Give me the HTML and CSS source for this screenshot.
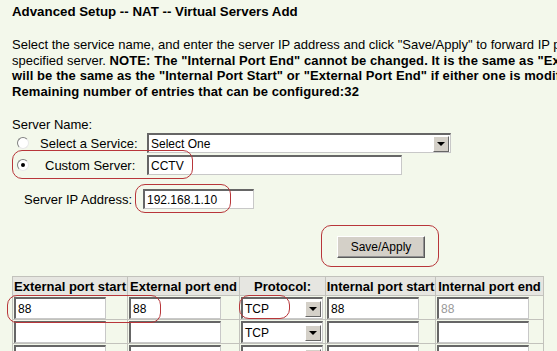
FILE: index.html
```html
<!DOCTYPE html>
<html lang="en">

<head>
  <meta charset="UTF-8" />
  <title>Virtual Servers Add</title>
  <link rel="stylesheet" href="styles.css">
</head>

<body>
  <div class="page">
    <div class="title">Advanced Setup -- NAT -- Virtual Servers Add</div>

    <p class="intro">
      Select the service name, and enter the server IP address and click "Save/Apply" to forward IP packets for this service to the<br>
      specified server. <b>NOTE: The "Internal Port End" cannot be changed. It is the same as "External Port End" normally and<br>
      will be the same as the "Internal Port Start" or "External Port End" if either one is modified.</b><br>
      <b>Remaining number of entries that can be configured:32</b>
    </p>

    <div class="server-name">Server Name:</div>
    <div class="service-grid">
      <span class="radio"></span>
      <span class="label">Select a Service:</span>
      <div class="select service-select"><span class="val">Select One</span><span class="arrow"></span></div>

      <span class="radio checked"></span>
      <span class="label indent">Custom Server:</span>
      <input class="field custom-field" type="text" value="CCTV">
    </div>

    <div class="ip-row">
      <span class="ip-label">Server IP Address:</span>
      <input class="field ip-field" type="text" value="192.168.1.10">
    </div>

    <div class="actions">
      <button type="button" class="btn">Save/Apply</button>
    </div>

    <table class="ports">
      <colgroup>
        <col style="width:115px"><col style="width:112px"><col style="width:86px"><col style="width:110px"><col style="width:108px">
      </colgroup>
      <tr>
        <th>External port start</th>
        <th>External port end</th>
        <th>Protocol:</th>
        <th>Internal port start</th>
        <th>Internal port end</th>
      </tr>
      <tr>
        <td><input class="field port" type="text" value="88"></td>
        <td><input class="field port" type="text" value="88"></td>
        <td><div class="select proto"><span class="val">TCP</span><span class="arrow"></span></div></td>
        <td><input class="field port" type="text" value="88"></td>
        <td><input class="field port" type="text" value="88" disabled></td>
      </tr>
      <tr>
        <td><input class="field port" type="text"></td>
        <td><input class="field port" type="text"></td>
        <td><div class="select proto"><span class="val">TCP</span><span class="arrow"></span></div></td>
        <td><input class="field port" type="text"></td>
        <td><input class="field port" type="text" disabled></td>
      </tr>
      <tr>
        <td><input class="field port" type="text"></td>
        <td><input class="field port" type="text"></td>
        <td><div class="select proto"><span class="val">TCP</span><span class="arrow"></span></div></td>
        <td><input class="field port" type="text"></td>
        <td><input class="field port" type="text" disabled></td>
      </tr>
    </table>

    <!-- red annotation marks drawn over the form -->
    <div class="mark mark-custom"></div>
    <div class="mark mark-ip"></div>
    <div class="mark mark-save"></div>
    <div class="mark mark-ports"></div>
    <div class="mark mark-proto"></div>
  </div>
</body>

</html>
```

FILE: styles.css
```css
* {
  box-sizing: border-box;
}

html,
body {
  margin: 0;
  padding: 0;
  overflow: hidden;
}

body {
  background: #f3f8eb;
  font-family: 'Liberation Sans', Arial, sans-serif;
  font-size: 13px;
  color: #000;
}

.page {
  position: relative;
  width: 820px;
  padding: 5px 12px 0;
}

.title {
  font-weight: bold;
  font-size: 13.3px;
  line-height: 14px;
}

.intro {
  margin: 18px 0 0;
  line-height: 15.5px;
  white-space: nowrap;
}

.intro b {
  letter-spacing: 0.1px;
}

.server-name {
  margin-top: 18px;
  line-height: 15px;
}

.service-grid {
  display: grid;
  grid-template-columns: 28px 107px auto;
  row-gap: 2px;
  align-items: center;
  margin-top: 1px;
}

.label.indent {
  padding-left: 5px;
}

.radio {
  position: relative;
  width: 12px;
  height: 12px;
  margin-left: 5px;
  border-radius: 50%;
  background: #fff;
  border: 1px solid;
  border-color: #808080 #e8e8e8 #e8e8e8 #808080;
}

.radio.checked::after {
  content: '';
  position: absolute;
  left: 3px;
  top: 3px;
  width: 4px;
  height: 4px;
  border-radius: 50%;
  background: #000;
}

.field {
  height: 20px;
  margin: 0;
  padding: 0 2px;
  font-family: inherit;
  font-size: 12px;
  color: #000;
  background: #fff;
  border-style: solid;
  border-width: 2px 1px 1px 2px;
  border-color: #666 #c8c8c8 #c8c8c8 #666;
  outline: none;
}

.field:disabled {
  color: #999;
  background: #fff;
}

.custom-field {
  width: 255px;
}

.select {
  display: flex;
  align-items: center;
  height: 20px;
  font-size: 12px;
  background: #fff;
  border-style: solid;
  border-width: 2px 1px 1px 2px;
  border-color: #666 #c8c8c8 #c8c8c8 #666;
}

.select .val {
  flex: 1;
  padding-left: 2px;
}

.select .arrow {
  position: relative;
  width: 16px;
  height: 16px;
  margin-right: 1px;
  background: #d4d0c8;
  border: 1px solid;
  border-color: #fff #666 #666 #fff;
}

.select .arrow::after {
  content: '';
  position: absolute;
  left: 3px;
  top: 5px;
  border-left: 4px solid transparent;
  border-right: 4px solid transparent;
  border-top: 4px solid #000;
}

.service-select {
  width: 304px;
}

.ip-row {
  display: flex;
  align-items: center;
  margin-top: 14px;
  padding-left: 12px;
}

.ip-label {
  width: 119px;
}

.ip-field {
  width: 111px;
}

.actions {
  margin-top: 27px;
  padding-left: 325px;
}

.btn {
  width: 88px;
  height: 22px;
  padding: 0;
  font-family: inherit;
  font-size: 12px;
  color: #000;
  background: #d4d0c8;
  border: 1px solid;
  border-color: #fff #5a5a5a #5a5a5a #fff;
  box-shadow: inset -1px -1px 0 #909090;
}

.ports {
  margin-top: 18px;
  border-collapse: collapse;
  table-layout: fixed;
}

.ports th {
  height: 19px;
  padding: 0;
  font-size: 13px;
  white-space: nowrap;
  background: #e6e6e1;
  border: 1px solid #c2c2bc;
}

.ports td {
  height: 24px;
  padding: 1px 1px 0;
  vertical-align: top;
  border: 1px solid #c2c2bc;
}

.ports .port {
  width: 92px;
  height: 22px;
}

.ports .proto {
  width: 82px;
  height: 22px;
}

.mark {
  position: absolute;
  border: 1px solid #b8363a;
  border-radius: 10px;
}

.mark-custom { left: 12px; top: 150px; width: 181px; height: 29px; }
.mark-ip { left: 135px; top: 184px; width: 96px; height: 29px; }
.mark-save { left: 321px; top: 225px; width: 118px; height: 42px; }
.mark-ports { left: 7px; top: 295px; width: 154px; height: 28px; }
.mark-proto { left: 239px; top: 295px; width: 51px; height: 24px; }
```
